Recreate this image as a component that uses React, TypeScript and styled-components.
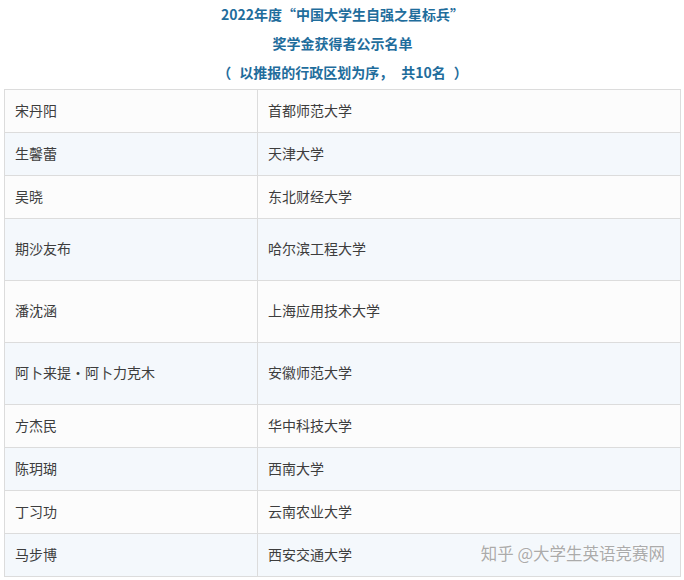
import React from "react";
import styled, { createGlobalStyle } from "styled-components";

const Global = createGlobalStyle`
  html, body { margin: 0; padding: 0; background: #ffffff; }
  body {
    font-family: "Noto Sans CJK SC", "Noto Sans", sans-serif;
  }
`;

const Page = styled.div`
  width: 684px;
  padding: 0 3px 0 4px;
  box-sizing: border-box;
  position: relative;
`;

const TitleBlock = styled.div`
  margin-bottom: 2px;
`;

const TitleLine = styled.div`
  height: 29px;
  line-height: 29px;
  text-align: center;
  font-size: 14px;
  font-weight: 700;
  color: #1f6d9c;
`;

const Punct = styled.span<{ $side: "left" | "right" }>`
  padding-${(p) => p.$side}: 8px;
`;

const Table = styled.div`
  border-top: 1px solid #dcdcdc;
  border-left: 1px solid #dcdcdc;
  border-right: 1px solid #dcdcdc;
  position: relative;
`;

const Row = styled.div<{ $tall?: boolean; $alt?: boolean }>`
  display: grid;
  grid-template-columns: 253px 1fr;
  height: ${(p) => (p.$tall ? 61 : 42)}px;
  border-bottom: 1px solid #dcdcdc;
  background: ${(p) => (p.$alt ? "#f4f8fc" : "#fcfcfc")};
`;

const Cell = styled.div<{ $first?: boolean }>`
  display: flex;
  align-items: center;
  padding: 0 0 3px 10px;
  font-size: 14px;
  color: #3d3d3d;
  border-right: ${(p) => (p.$first ? "1px solid #dcdcdc" : "none")};
`;

const Watermark = styled.div`
  position: absolute;
  right: 15px;
  bottom: 12px;
  font-size: 16.5px;
  color: #ababab;
  text-shadow: 0 0 2px #ffffff, 0 0 1px #ffffff;
  white-space: nowrap;
`;

const rows: { name: string; school: string; tall?: boolean }[] = [
  { name: "宋丹阳", school: "首都师范大学" },
  { name: "生馨蕾", school: "天津大学" },
  { name: "吴晓", school: "东北财经大学" },
  { name: "期沙友布", school: "哈尔滨工程大学", tall: true },
  { name: "潘沈涵", school: "上海应用技术大学", tall: true },
  { name: "阿卜来提·阿卜力克木", school: "安徽师范大学", tall: true },
  { name: "方杰民", school: "华中科技大学" },
  { name: "陈玥瑚", school: "西南大学" },
  { name: "丁习功", school: "云南农业大学" },
  { name: "马步博", school: "西安交通大学" },
];

export default function App() {
  return (
    <Page>
      <Global />
      <TitleBlock>
        <TitleLine>2022年度“中国大学生自强之星标兵”</TitleLine>
        <TitleLine>奖学金获得者公示名单</TitleLine>
        <TitleLine>
          <Punct $side="right">（</Punct>以推报的行政区划为序
          <Punct $side="right">，</Punct>共10名<Punct $side="left">）</Punct>
        </TitleLine>
      </TitleBlock>
      <Table>
        {rows.map((r, i) => (
          <Row key={r.name} $tall={r.tall} $alt={i % 2 === 1}>
            <Cell $first>{r.name}</Cell>
            <Cell>{r.school}</Cell>
          </Row>
        ))}
        <Watermark>知乎 @大学生英语竞赛网</Watermark>
      </Table>
    </Page>
  );
}
